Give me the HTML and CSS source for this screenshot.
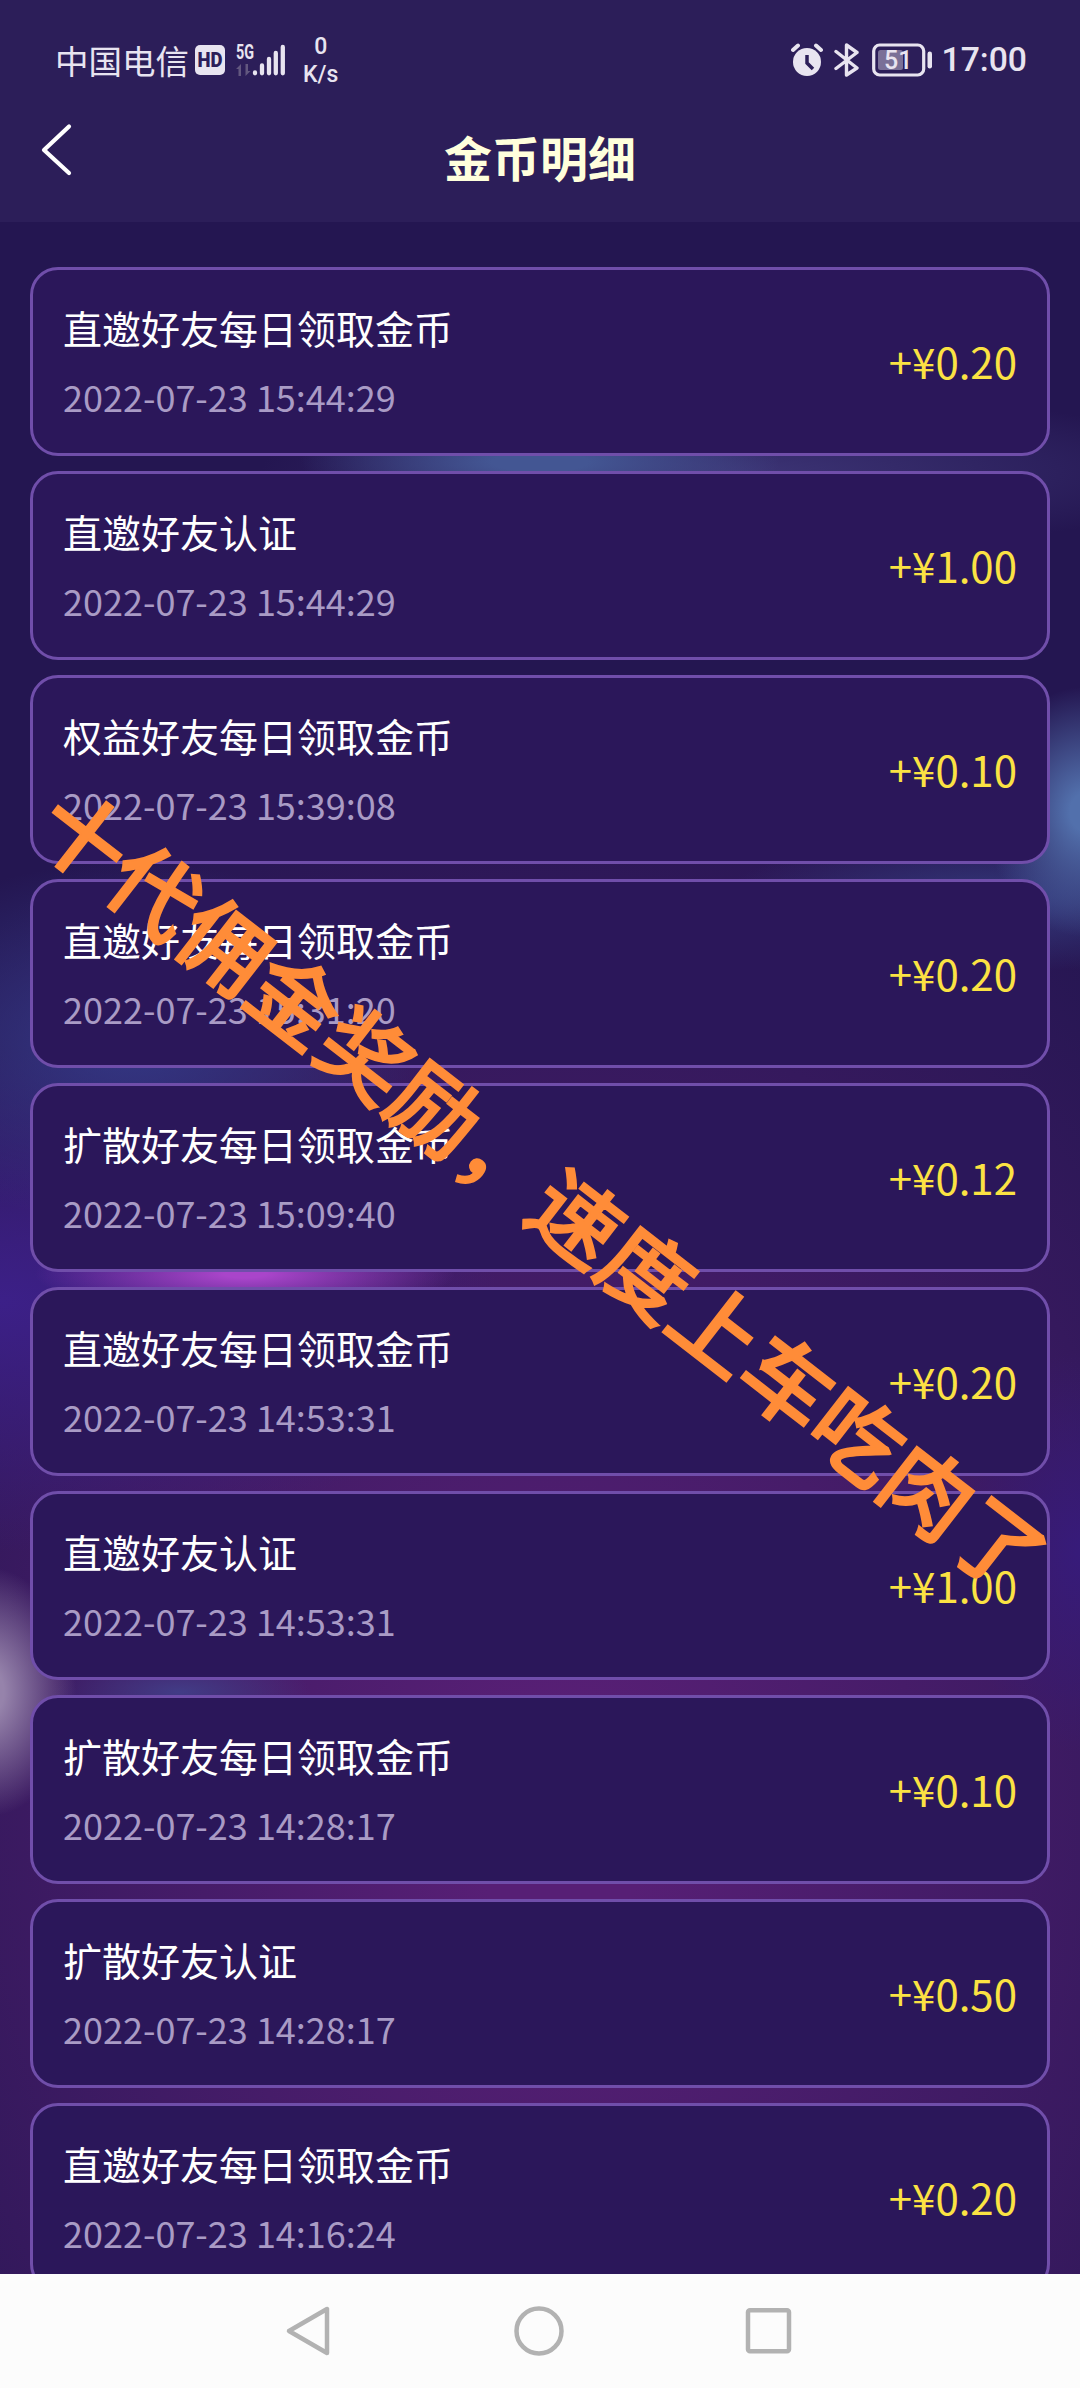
FILE: index.html
```html
<!DOCTYPE html>
<html lang="zh-CN">
<head>
<meta charset="utf-8">
<title>金币明细</title>
<link rel="stylesheet" href="styles.css">
</head>
<body>
<div class="phone">
  <header class="header">
    <div class="status">
      <div class="status-left">
        <span class="carrier">中国电信</span>
        <svg class="hd" width="30" height="30" viewBox="0 0 30 30"><rect width="30" height="30" rx="5" fill="#e8e4f0"/><text x="15" y="22" text-anchor="middle" textLength="25" lengthAdjust="spacingAndGlyphs" class="hd-text">HD</text></svg>
        <svg class="signal" width="50" height="48" viewBox="0 -6 50 48">
          <text x="0" y="17" class="net" textLength="18" lengthAdjust="spacingAndGlyphs">5G</text>
          <g fill="#62577f"><path d="M0 27l5-5v12H2.500V27zM14.500 29l-5 5V22H12v7z"/></g>
          <g stroke="#e8e4f0" stroke-width="4.300" stroke-linecap="round"><path d="M19 30.500v0.800M26 23.500v7.800M33 17v14.300M39.800 11V31.300M46.800 5V31.300"/></g>
        </svg>
        <div class="speed"><span>0</span><span>K/s</span></div>
      </div>
      <div class="status-right">
        <svg width="32" height="34" viewBox="0 0 32 34"><circle cx="16" cy="19" r="14" fill="#e8e4f0"/><path d="M2 7l5-4.500M30 7l-5-4.500" stroke="#e8e4f0" stroke-width="4" stroke-linecap="round"/><path d="M16 12v8l6 6" fill="none" stroke="#2c1e59" stroke-width="3.500"/></svg>
        <svg class="bt" width="26" height="34" viewBox="0 0 26 34"><path d="M2 8.500L23 25 12.500 32V2L23 9.500 2 25.500" fill="none" stroke="#e8e4f0" stroke-width="3.400" stroke-linejoin="round" stroke-linecap="round"/></svg>
        <svg class="battery" width="61" height="34" viewBox="0 0 61 34"><rect x="1.700" y="2" width="50" height="30" rx="6" fill="none" stroke="#e8e4f0" stroke-width="3.200"/><rect x="6" y="7" width="25" height="20" rx="2.500" fill="#7a7097"/><rect x="55.500" y="8.500" width="4.500" height="17" rx="2.200" fill="#e8e4f0"/><text x="12" y="26" class="level">51</text></svg>
        <span class="clock">17:00</span>
      </div>
    </div>
    <div class="titlebar">
      <svg class="back" width="34" height="56" viewBox="0 0 34 56"><path d="M29 4.500L4 28l25 23" fill="none" stroke="#fff" stroke-width="4.200" stroke-linecap="round" stroke-linejoin="round"/></svg>
      <h1 class="title">金币明细</h1>
    </div>
  </header>
  <main class="list">
    <article class="card"><div><h2>直邀好友每日领取金币</h2><time>2022-07-23 15:44:29</time></div><span class="amount">+¥0.20</span></article>
    <article class="card"><div><h2>直邀好友认证</h2><time>2022-07-23 15:44:29</time></div><span class="amount">+¥1.00</span></article>
    <article class="card"><div><h2>权益好友每日领取金币</h2><time>2022-07-23 15:39:08</time></div><span class="amount">+¥0.10</span></article>
    <article class="card"><div><h2>直邀好友每日领取金币</h2><time>2022-07-23 15:31:20</time></div><span class="amount">+¥0.20</span></article>
    <article class="card"><div><h2>扩散好友每日领取金币</h2><time>2022-07-23 15:09:40</time></div><span class="amount">+¥0.12</span></article>
    <article class="card"><div><h2>直邀好友每日领取金币</h2><time>2022-07-23 14:53:31</time></div><span class="amount">+¥0.20</span></article>
    <article class="card"><div><h2>直邀好友认证</h2><time>2022-07-23 14:53:31</time></div><span class="amount">+¥1.00</span></article>
    <article class="card"><div><h2>扩散好友每日领取金币</h2><time>2022-07-23 14:28:17</time></div><span class="amount">+¥0.10</span></article>
    <article class="card"><div><h2>扩散好友认证</h2><time>2022-07-23 14:28:17</time></div><span class="amount">+¥0.50</span></article>
    <article class="card"><div><h2>直邀好友每日领取金币</h2><time>2022-07-23 14:16:24</time></div><span class="amount">+¥0.20</span></article>
  </main>
  <nav class="nav">
    <svg width="50" height="54" viewBox="0 0 50 54"><path d="M43 5v44L5 27z" fill="none" stroke="#b2b2b2" stroke-width="4.500" stroke-linejoin="round"/></svg>
    <svg width="54" height="54" viewBox="0 0 54 54"><circle cx="27" cy="27" r="22.500" fill="none" stroke="#b2b2b2" stroke-width="4.500"/></svg>
    <svg width="50" height="54" viewBox="0 0 50 54"><rect x="4" y="6.300" width="41" height="41" rx="2" fill="none" stroke="#b2b2b2" stroke-width="4.500"/></svg>
  </nav>
  <div class="slogan">十代佣金奖励，速度上车吃肉了</div>
</div>
</body>
</html>
```
FILE: styles.css
```css
* { box-sizing: border-box; }
body { margin: 0; font-family: "Noto Sans CJK SC", sans-serif; }
h1, h2 { margin: 0; }
svg { display: block; flex: none; }
.phone {
  position: relative;
  display: flex;
  flex-direction: column;
  width: 1080px;
  height: 2388px;
  overflow: hidden;
}
.header { flex: none; height: 222px; background: #2c1e59; }
.status {
  display: flex;
  justify-content: space-between;
  height: 120px;
  padding: 0 53px 0 55px;
  color: #e8e4f0;
}
.status-left, .status-right { display: flex; align-items: center; }
.carrier { font-size: 33.5px; line-height: 50px; }
.hd { margin-left: 6px; }
.hd-text { font: 900 20px Roboto, sans-serif; fill: #2c1e59; }
.signal { margin-left: 11px; }
.net { font: 700 20px Roboto, sans-serif; fill: #e8e4f0; }
.speed {
  display: flex;
  flex-direction: column;
  align-items: center;
  margin: 2px 0 0 17px;
  font: 500 23px/28px Roboto, sans-serif;
}
.bt { margin-left: 11px; }
.battery { margin-left: 12px; }
.level { font: 500 25px Roboto, sans-serif; fill: #e8e4f0; }
.clock { margin-left: 9px; font: 500 33.700px/50px Roboto, sans-serif; }
.titlebar {
  display: grid;
  grid-template-columns: 80px 1fr 80px;
  align-items: center;
  height: 76px;
}
.back { margin: -16px 0 0 40px; }
.title {
  margin-top: -4px;
  color: #ffffdc;
  font-size: 48px;
  font-weight: 700;
  line-height: 72px;
  text-align: center;
}
.list {
  display: flex;
  flex: 1;
  flex-direction: column;
  gap: 15px;
  min-height: 0;
  padding: 45px 30px 0;
  overflow: hidden;
  background:
    radial-gradient(ellipse 90px 125px at -14px 1470px, #9683ab 20%, #9683ab00),
    radial-gradient(ellipse 210px 40px at 245px 1052px, #a945ca 10%, #a945ca00),
    radial-gradient(ellipse 100px 125px at 1085px 590px, #5270ac 15%, #5270ac00),
    radial-gradient(ellipse 240px 50px at 540px 240px, #435693 20%, #43569300),
    radial-gradient(ellipse 480px 80px at 740px 250px, #3c3475, #3c347500),
    radial-gradient(ellipse 280px 70px at 1000px 680px, #343a7c, #343a7c00),
    radial-gradient(ellipse 130px 40px at 180px 1470px, #423c86, #423c8600),
    radial-gradient(ellipse 300px 180px at 130px 820px, #333884, #33388400),
    radial-gradient(ellipse 500px 250px at 0 1080px, #3c2088, #3c208800),
    radial-gradient(ellipse 120px 200px at 1080px 1330px, #371b7a, #371b7a00),
    radial-gradient(ellipse 900px 1150px at 560px 1600px, #571f75 10%, #571f7500),
    #241651;
}
.card {
  display: flex;
  flex: none;
  align-items: center;
  justify-content: space-between;
  height: 189px;
  padding: 0 30px;
  border: 3px solid #704eaa;
  border-radius: 28px;
  background: #2b175a;
}
.card h2 { margin-top: -3px; color: #fff; font-size: 39px; font-weight: 400; line-height: 60px; }
.card time { display: block; margin-top: 12px; color: #a99bc5; font-size: 36px; line-height: 54px; }
.amount { margin-top: -2px; color: #fbe243; font-size: 42px; line-height: 60px; }
.nav {
  display: flex;
  flex: none;
  align-items: center;
  justify-content: space-between;
  height: 114px;
  padding: 0 286px 0 284px;
  background: #fcfcfc;
}
.slogan {
  position: absolute;
  left: 544px;
  top: 1188px;
  color: #ff8c38;
  font-size: 89px;
  font-weight: 500;
  line-height: 120px;
  white-space: nowrap;
  -webkit-text-stroke: 1.8px #ff8c38;
  transform: translate(-50%, -50%) rotate(37.8deg);
}
```
